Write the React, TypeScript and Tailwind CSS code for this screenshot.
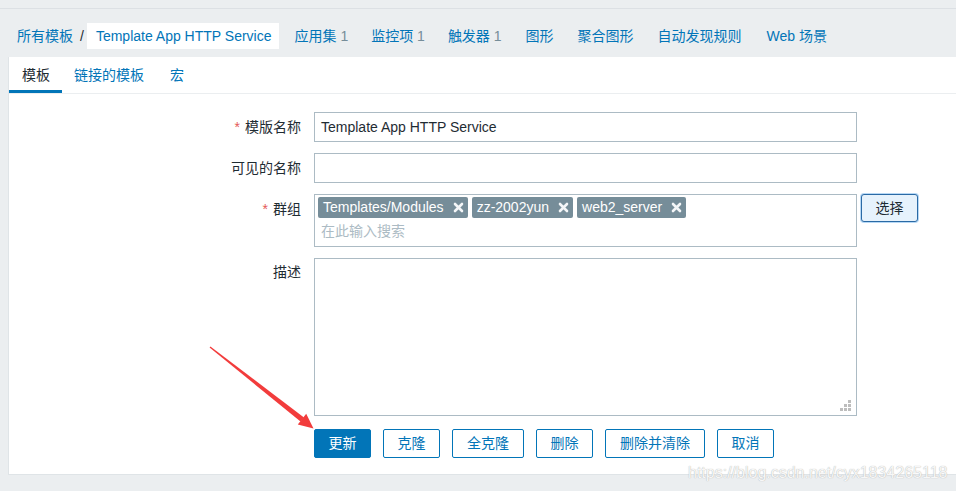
import React from 'react';

const font = { fontFamily: '"Liberation Sans", Arial, "Noto Sans CJK SC", sans-serif' };

const navItems = [
  { label: '应用集', count: '1', gap: 'ml-0' },
  { label: '监控项', count: '1', gap: 'ml-[23px]' },
  { label: '触发器', count: '1', gap: 'ml-[23px]' },
  { label: '图形', gap: 'ml-[24px]' },
  { label: '聚合图形', gap: 'ml-[24px]' },
  { label: '自动发现规则', gap: 'ml-[24px]' },
  { label: 'Web 场景', gap: 'ml-[25px]' },
];

const tags = ['Templates/Modules', 'zz-2002yun', 'web2_server'];

const actions = [
  { label: '克隆', pad: 'px-[13.5px]' },
  { label: '全克隆', pad: 'px-[14px]' },
  { label: '删除', pad: 'px-[13.5px]' },
  { label: '删除并清除', pad: 'px-[14px]' },
  { label: '取消', pad: 'px-[13.5px]' },
];

function XIcon() {
  return (
    <svg width="11" height="11" viewBox="0 0 11 11" className="ml-[9px]">
      <path d="M2 2 L9 9 M9 2 L2 9" stroke="#f4f6f8" strokeWidth="2.6" strokeLinecap="round" />
    </svg>
  );
}

function Grip() {
  return (
    <svg width="12" height="12" viewBox="0 0 12 12" className="absolute bottom-[3px] right-[4px]">
      <rect x="8" y="0" width="3" height="3" fill="#bdbdbd" />
      <rect x="4" y="4" width="3" height="3" fill="#bdbdbd" />
      <rect x="8" y="4" width="3" height="3" fill="#bdbdbd" />
      <rect x="0" y="8" width="3" height="3" fill="#bdbdbd" />
      <rect x="4" y="8" width="3" height="3" fill="#bdbdbd" />
      <rect x="8" y="8" width="3" height="3" fill="#bdbdbd" />
    </svg>
  );
}

function Label({ text, required, className = '' }: { text: string; required?: boolean; className?: string }) {
  return (
    <div className={`w-[292px] shrink-0 text-right text-[14px] text-[#1f2c33] ${className}`}>
      {required && <span className="mr-[5px] text-[#e45959]">*</span>}
      {text}
    </div>
  );
}

export default function App() {
  return (
    <div className="relative h-[491px] w-[956px] overflow-hidden bg-[#ebeef0]" style={font}>
      {/* header */}
      <div className="h-[9px] border-b border-[#dce0e4]" />
      <div className="flex h-[48px] items-start pt-[14px] text-[14px]">
        <div className="flex h-[26px] items-center pl-[17px] text-[#0275b8]">所有模板</div>
        <div className="ml-[7px] flex h-[26px] items-center text-[#1f2c33]">/</div>
        <div className="ml-[3px] flex h-[26px] items-center bg-white pl-[9px] pr-[7px] text-[#0275b8]">
          Template App HTTP Service
        </div>
        <div className="ml-[16px] flex h-[26px] items-center">
          {navItems.map((n) => (
            <span key={n.label} className={`whitespace-nowrap text-[#0275b8] ${n.gap}`}>
              {n.label}
              {n.count && <span className="text-[#768d99]"> {n.count}</span>}
            </span>
          ))}
        </div>
      </div>

      {/* panel */}
      <div className="ml-[8px] h-[418px] border-b border-l border-[#dfe4e7] bg-white">
        <div className="flex h-[37px] border-b border-[#ebeef0] text-[14px]">
          <div className="flex items-center border-b-[3px] border-[#0275b8] pl-[13px] pr-[12px] pt-[3px] text-[#1f2c33]">模板</div>
          <div className="flex items-center px-[12px] text-[#0275b8]">链接的模板</div>
          <div className="flex items-center px-[14px] text-[#0275b8]">宏</div>
        </div>

        <div className="flex flex-col gap-[11px] pt-[18px]">
          <div className="flex items-center gap-[13px]">
            <Label text="模版名称" required />
            <div className="flex h-[30px] w-[543px] items-center border border-[#acbbc4] px-[6px] text-[14px] text-[#1f2c33]">
              Template App HTTP Service
            </div>
          </div>
          <div className="flex items-center gap-[13px]">
            <Label text="可见的名称" />
            <div className="h-[30px] w-[543px] border border-[#acbbc4]" />
          </div>
          <div className="flex items-start gap-[13px]">
            <Label text="群组" required className="pt-[5px]" />
            <div className="h-[53px] w-[543px] border border-[#acbbc4] px-[3px] pt-[2px]">
              <div className="flex gap-[4px]">
                {tags.map((t) => (
                  <div key={t} className="flex h-[21px] items-center rounded-[2px] bg-[#768d99] pl-[5px] pr-[4px] text-[14px] text-white">
                    {t}
                    <XIcon />
                  </div>
                ))}
              </div>
              <div className="pl-[3px] pt-[3px] text-[14px] leading-[20px] text-[#acbbc4]">在此输入搜索</div>
            </div>
            <button className="ml-[-9px] h-[28px] w-[57px] rounded-[3px] border border-[#2a6aa5] bg-[#e6f2fc] text-[14px] text-[#1f2c33] shadow-[0_0_0_1px_#b7d8f5]">
              选择
            </button>
          </div>
          <div className="flex items-start gap-[13px]">
            <Label text="描述" className="pt-[4px]" />
            <div className="relative h-[158px] w-[543px] border border-[#acbbc4]">
              <Grip />
            </div>
          </div>
          <div className="mt-[2px] flex gap-3 pl-[305px] text-[14px]">
            <button className="h-[29px] rounded-[2px] border border-[#0275b8] bg-[#0275b8] px-[13.5px] text-white">更新</button>
            {actions.map((a) => (
              <button key={a.label} className={`h-[29px] rounded-[2px] border border-[#0275b8] bg-white text-[#0275b8] ${a.pad}`}>
                {a.label}
              </button>
            ))}
          </div>
        </div>
      </div>

      {/* annotation arrow */}
      <svg className="pointer-events-none absolute left-0 top-0" width="956" height="491">
        <polygon points="209.6,347.5 210.4,346.5 304,417.5 300.5,421.5" fill="#f23c3c" />
        <polygon points="313.5,428.5 297.8,424.5 306.2,413.8" fill="#f23c3c" />
      </svg>

      {/* watermark */}
      <div className="pointer-events-none absolute left-[688px] top-[461px] text-[16px] text-[#f7f7f7] [text-shadow:0_0_1px_#a0a0a0]">
        https://blog.csdn.net/cyx1834265118
      </div>
    </div>
  );
}
